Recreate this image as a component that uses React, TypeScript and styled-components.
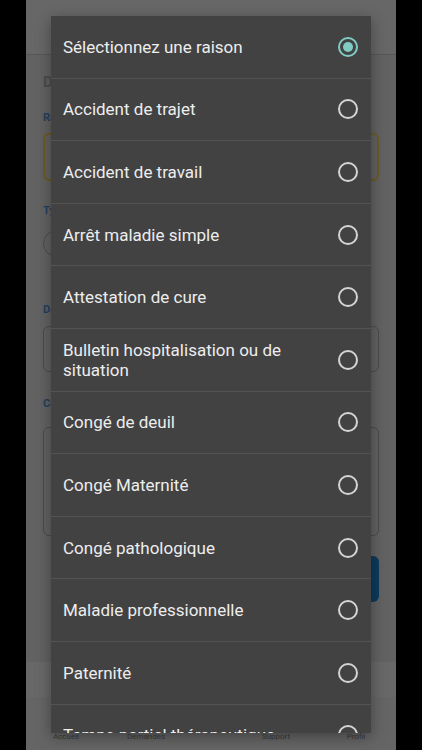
import * as React from "react";
import styled, { createGlobalStyle } from "styled-components";

const GlobalStyle = createGlobalStyle`
  html, body {
    margin: 0;
    padding: 0;
    background: #000;
  }
  * {
    box-sizing: border-box;
  }
`;

const reasons = [
  "Sélectionnez une raison",
  "Accident de trajet",
  "Accident de travail",
  "Arrêt maladie simple",
  "Attestation de cure",
  "Bulletin hospitalisation ou de situation",
  "Congé de deuil",
  "Congé Maternité",
  "Congé pathologique",
  "Maladie professionnelle",
  "Paternité",
  "Temps partiel thérapeutique",
];

const tabs = ["Accueil", "Demandes", "", "Support", "Profil"];

const Frame = styled.div`
  width: 422px;
  height: 750px;
  background: #000;
  display: flex;
  justify-content: center;
  position: relative;
  overflow: hidden;
  font-family: Roboto, "Noto Sans", sans-serif;
`;

const Screen = styled.div`
  width: 370px;
  height: 750px;
  background: #626262;
  display: flex;
  flex-direction: column;
`;

const Header = styled.header`
  height: 55px;
  flex-shrink: 0;
  background: #676767;
  border-bottom: 1px solid #575757;
`;

const Form = styled.main`
  flex: 1;
  padding: 18px 17px 0;
  display: flex;
  flex-direction: column;
`;

const Title = styled.h1`
  margin: 0;
  font-size: 15px;
  line-height: 18px;
  font-weight: 700;
  color: #4c4c4c;
  white-space: nowrap;
`;

const Label = styled.label<{ $top: number; $bottom: number }>`
  display: block;
  margin-top: ${(p) => p.$top}px;
  margin-bottom: ${(p) => p.$bottom}px;
  font-size: 11px;
  line-height: 13px;
  font-weight: 700;
  color: #22405f;
`;

const Field = styled.div<{ $h: number; $focus?: boolean }>`
  height: ${(p) => p.$h}px;
  border-radius: 6px;
  border: ${(p) => (p.$focus ? "2px solid #6b5c1f" : "1px solid #4b4b4b")};
`;

const Pill = styled.div`
  width: 150px;
  height: 27px;
  border-radius: 14px;
  border: 1px solid #4b4b4b;
`;

const Submit = styled.button`
  align-self: flex-end;
  margin-top: 20px;
  width: 160px;
  height: 46px;
  border: none;
  border-radius: 6px;
  background: #0c3a5d;
`;

const Band = styled.div`
  height: 35px;
  flex-shrink: 0;
  background: #686868;
`;

const Nav = styled.nav`
  height: 53px;
  flex-shrink: 0;
  background: #656565;
  display: grid;
  grid-template-columns: 80px 80px 50px 80px 80px;
  align-items: end;
  padding-bottom: 8px;
`;

const Tab = styled.span`
  text-align: center;
  font-size: 8px;
  line-height: 10px;
  color: #3b3b3b;
`;

const Dialog = styled.div`
  position: absolute;
  left: 51px;
  top: 16px;
  width: 320px;
  height: 717px;
  overflow: hidden;
  background: #424242;
  box-shadow: 0 4px 14px rgba(0, 0, 0, 0.35);
`;

const Option = styled.div`
  height: 62.6px;
  display: flex;
  align-items: center;
  gap: 20px;
  padding: 0 12px 0 12px;
  border-bottom: 1px solid #535353;
`;

const OptionText = styled.span`
  flex: 1;
  font-size: 17px;
  line-height: 20px;
  color: #ededed;
`;

const Radio = styled.span<{ $checked?: boolean }>`
  width: 20px;
  height: 20px;
  flex-shrink: 0;
  margin-right: 1px;
  border-radius: 50%;
  border: 2px solid ${(p) => (p.$checked ? "#80cbc4" : "#d4d4d4")};
  display: flex;
  align-items: center;
  justify-content: center;

  &::after {
    content: "";
    width: 10px;
    height: 10px;
    border-radius: 50%;
    background: ${(p) => (p.$checked ? "#80cbc4" : "transparent")};
  }
`;

export default function App() {
  return (
    <Frame>
      <GlobalStyle />
      <Screen>
        <Header />
        <Form>
          <Title>Déclarer une absence</Title>
          <Label $top={20} $bottom={9}>Raison</Label>
          <Field $h={48} $focus />
          <Label $top={23} $bottom={13}>Type</Label>
          <Pill />
          <Label $top={46} $bottom={10}>Date</Label>
          <Field $h={46} />
          <Label $top={25} $bottom={17}>Commentaire</Label>
          <Field $h={109} />
          <Submit />
        </Form>
        <Band />
        <Nav>
          {tabs.map((t, i) => (
            <Tab key={i}>{t}</Tab>
          ))}
        </Nav>
      </Screen>
      <Dialog>
        {reasons.map((r, i) => (
          <Option key={r}>
            <OptionText>{r}</OptionText>
            <Radio $checked={i === 0} />
          </Option>
        ))}
      </Dialog>
    </Frame>
  );
}
